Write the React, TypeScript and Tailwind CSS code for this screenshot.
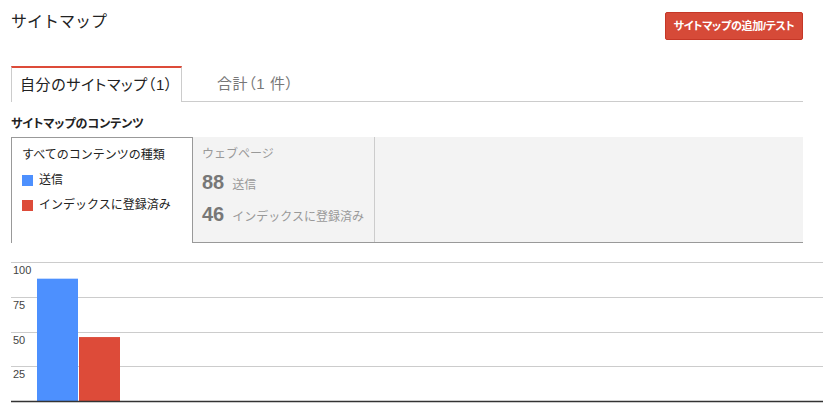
const jp = "font-['Arial','Liberation_Sans','Noto_Sans_CJK_JP',sans-serif]";
const palt = "[font-feature-settings:'palt']";

const legend = [
  { name: "送信", color: "bg-[#4d90fe]" },
  { name: "インデックスに登録済み", color: "bg-[#dd4b39]" },
];

const stats = [
  { value: 88, label: "送信" },
  { value: 46, label: "インデックスに登録済み" },
];

const ticks = [
  { y: 0.5, label: "100" },
  { y: 35.5, label: "75" },
  { y: 70.5, label: "50" },
  { y: 104.5, label: "25" },
];

function Chart() {
  const base = 139;
  const scale = 1.39;
  return (
    <svg width="812" height="142" className="block">
      {ticks.map((t) => (
        <g key={t.label}>
          <line x1="0" x2="812" y1={t.y} y2={t.y} stroke="#cccccc" strokeWidth="1" />
          <text x="2" y={t.y + 11.5} fontSize="11" fill="#444" fontFamily="Arial, 'Liberation Sans', sans-serif">
            {t.label}
          </text>
        </g>
      ))}
      <rect x="26" y={base - 88 * scale} width="41" height={88 * scale} fill="#4d90fe" />
      <rect x="68" y={base - 46 * scale} width="41" height={46 * scale} fill="#dd4b39" />
      <line x1="0" x2="812" y1={base + 0.5} y2={base + 0.5} stroke="#333" strokeWidth="1.5" />
    </svg>
  );
}

export default function App() {
  return (
    <div className={`w-[823px] h-[409px] overflow-hidden bg-white text-[#222] ${jp}`}>
      <div className="flex justify-between items-start pl-[11px] pr-[20px] pt-[12px]">
        <h1 className="text-[16px] leading-[20px] font-normal">サイトマップ</h1>
        <button className={`w-[138px] h-[28px] rounded-[2px] bg-[#d64a38] border border-[#c53727] text-white text-[11px] font-bold tracking-[-0.3px] ${palt}`}>
          サイトマップの追加/テスト
        </button>
      </div>

      <div className={`mt-[26px] ml-[11px] mr-[20px] h-[36px] flex border-b border-[#cccccc] ${palt}`}>
        <div className="w-[171px] h-[36px] border-t-2 border-x border-t-[#dd4b39] border-x-[#cccccc] bg-white px-[8px] flex items-center text-[15px] tracking-[0.6px] text-[#222]">
          自分のサイトマップ（1）
        </div>
        <div className="ml-[35px] h-[35px] flex items-center pt-[2px] text-[15px] tracking-[0.6px] text-[#777]">
          合計（1 件）
        </div>
      </div>

      <h2 className={`mt-[14px] ml-[11px] text-[12px] leading-[16px] font-bold text-[#222] ${palt}`}>
        サイトマップのコンテンツ
      </h2>

      <div className="mt-[5px] ml-[11px] mr-[20px] h-[106px] flex">
        <div className="w-[182px] border border-b-0 border-[#999] bg-white pl-[10px] pt-[8px] text-[12px] text-[#222]">
          <p className="leading-[18px]">すべてのコンテンツの種類</p>
          {legend.map((l) => (
            <div key={l.name} className="mt-[7px] flex items-center gap-[6px] leading-[18px]">
              <span className={`w-[11px] h-[11px] ${l.color}`} />
              <span>{l.name}</span>
            </div>
          ))}
        </div>
        <div className="flex-1 flex bg-[#f3f3f3] border-b border-[#999]">
          <div className="w-[182px] border-r border-[#cccccc] pl-[9px] pt-[8px]">
            <p className="text-[12px] leading-[18px] text-[#999]">ウェブページ</p>
            {stats.map((s) => (
              <div key={s.label} className="mt-[6px] flex items-baseline gap-[8px]">
                <span className="text-[20px] leading-[26px] font-bold text-[#777]">{s.value}</span>
                <span className="text-[12px] text-[#999]">{s.label}</span>
              </div>
            ))}
          </div>
        </div>
      </div>

      <div className="mt-[19px] ml-[11px]">
        <Chart />
      </div>
    </div>
  );
}
